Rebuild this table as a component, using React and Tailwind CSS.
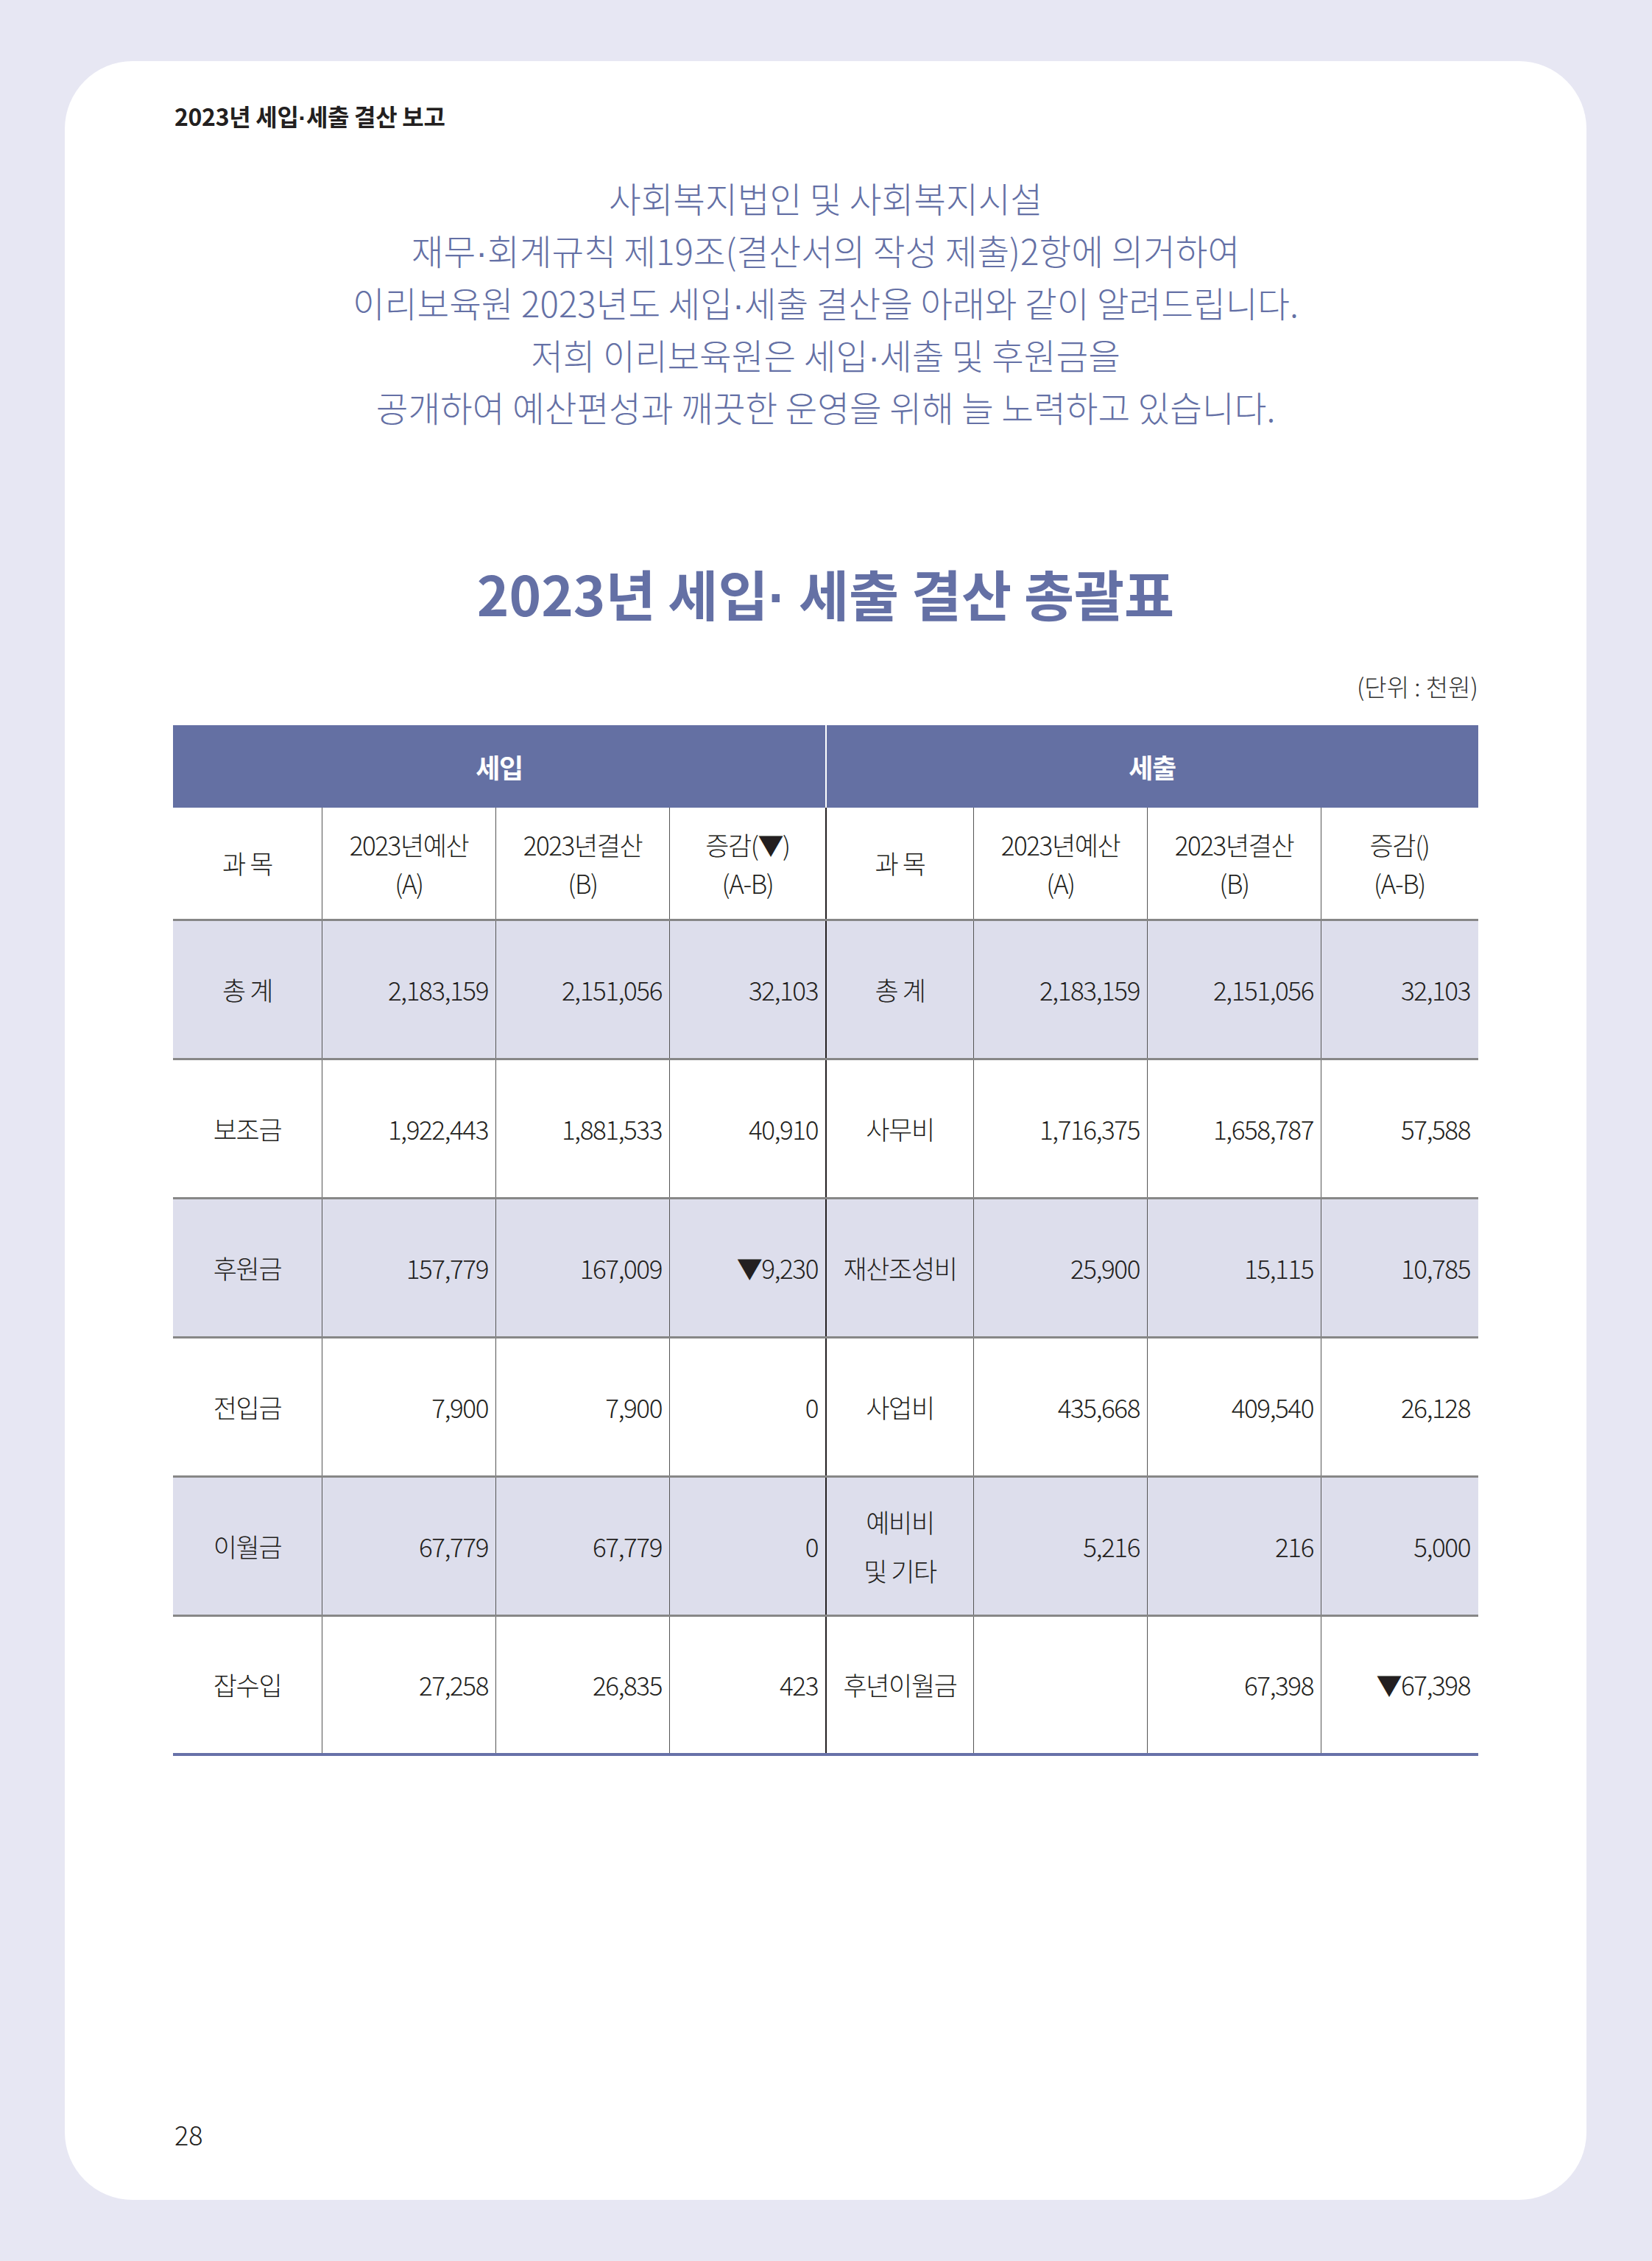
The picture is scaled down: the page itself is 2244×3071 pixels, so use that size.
import React from "react";

const rows = [
  { shade: true, a: ["총 계", "2,183,159", "2,151,056", "32,103"], b: ["총 계", "2,183,159", "2,151,056", "32,103"] },
  { shade: false, a: ["보조금", "1,922,443", "1,881,533", "40,910"], b: ["사무비", "1,716,375", "1,658,787", "57,588"] },
  { shade: true, a: ["후원금", "157,779", "167,009", "▼9,230"], b: ["재산조성비", "25,900", "15,115", "10,785"] },
  { shade: false, a: ["전입금", "7,900", "7,900", "0"], b: ["사업비", "435,668", "409,540", "26,128"] },
  { shade: true, a: ["이월금", "67,779", "67,779", "0"], b: ["예비비|및 기타", "5,216", "216", "5,000"] },
  { shade: false, a: ["잡수입", "27,258", "26,835", "423"], b: ["후년이월금", "", "67,398", "▼67,398"] },
];

const GRID = "grid grid-cols-[202px_236px_236px_212px_201px_236px_236px_213px]";
const VL = "border-l border-[#555555]";

function Dot() {
  return <span className="font-['Liberation_Sans',sans-serif] leading-none">·</span>;
}

function Label({ text }) {
  if (text.includes("|")) {
    const [l1, l2] = text.split("|");
    return (
      <div className="flex flex-col items-center leading-[66px]">
        <span>{l1}</span>
        <span>{l2}</span>
      </div>
    );
  }
  return <span>{text}</span>;
}

function SubHead({ l1, l2, border }) {
  return (
    <div className={`flex flex-col items-center justify-center leading-[52px] ${border}`}>
      <span>{l1}</span>
      <span>{l2}</span>
    </div>
  );
}

export default function App() {
  return (
    <div className="bg-[#e7e7f3] pl-[88px] py-[83px] font-['Noto_Sans_CJK_KR','Noto_Sans',sans-serif] text-[#231f20]">
      <div className="w-[2067px] h-[2905px] bg-white rounded-[92px] px-[147px] pt-[54px] flex flex-col">
        <div className="h-[40px] text-[32px] leading-[40px] font-semibold tracking-[-0.01em] pl-[2px]">
          2023년 세입<Dot />세출 결산 보고
        </div>

        <div className="mt-[56px] text-center text-[47.5px] leading-[71px] text-[#6470a5] font-light">
          <p className="h-[71px]">사회복지법인 및 사회복지시설</p>
          <p className="h-[71px]">재무<Dot />회계규칙 제19조(결산서의 작성 제출)2항에 의거하여</p>
          <p className="h-[71px]">이리보육원 2023년도 세입<Dot />세출 결산을 아래와 같이 알려드립니다.</p>
          <p className="h-[71px]">저희 이리보육원은 세입<Dot />세출 및 후원금을</p>
          <p className="h-[71px]">공개하여 예산편성과 깨끗한 운영을 위해 늘 노력하고 있습니다.</p>
        </div>

        <h1 className="mt-[172px] h-[90px] text-center text-[74px] leading-[90px] font-bold text-[#6470a5]">
          2023년 세입<Dot /> 세출 결산 총괄표
        </h1>

        <div className="mt-[62px] h-[40px] text-right text-[33px] leading-[40px] text-[#333333] font-light">
          (단위 : 천원)
        </div>

        <div className="mt-[33px] text-[35px] tracking-[-0.04em]">
          {/* header bar */}
          <div className={`${GRID} h-[112px] bg-[#6470a3] text-white font-bold text-[36px]`}>
            <div className="col-span-4 flex items-center justify-center">세입</div>
            <div className="col-span-4 flex items-center justify-center border-l-2 border-white">세출</div>
          </div>

          {/* sub header */}
          <div className={`${GRID} h-[154px] border-b-[3px] border-[#878787] font-light`}>
            <div className="flex items-center justify-center">과 목</div>
            <SubHead l1="2023년예산" l2="(A)" border={VL} />
            <SubHead l1="2023년결산" l2="(B)" border={VL} />
            <SubHead l1="증감(▼)" l2="(A-B)" border={VL} />
            <div className="flex items-center justify-center border-l-2 border-[#231f20]">과 목</div>
            <SubHead l1="2023년예산" l2="(A)" border={VL} />
            <SubHead l1="2023년결산" l2="(B)" border={VL} />
            <SubHead l1="증감()" l2="(A-B)" border={VL} />
          </div>

          {rows.map((r, i) => {
            const last = i === rows.length - 1;
            return (
              <div
                key={i}
                className={`${GRID} h-[189px] font-light ${r.shade ? "bg-[#dddeec]" : "bg-white"} ${
                  last ? "border-b-[4px] border-[#6771a8]" : "border-b-[3px] border-[#878787]"
                }`}
              >
                <div className="flex items-center justify-center">
                  <Label text={r.a[0]} />
                </div>
                {r.a.slice(1).map((v, j) => (
                  <div key={j} className={`flex items-center justify-end pr-[10px] ${VL}`}>
                    {v}
                  </div>
                ))}
                <div className="flex items-center justify-center border-l-2 border-[#231f20]">
                  <Label text={r.b[0]} />
                </div>
                {r.b.slice(1).map((v, j) => (
                  <div key={j} className={`flex items-center justify-end pr-[10px] ${VL}`}>
                    {v}
                  </div>
                ))}
              </div>
            );
          })}
        </div>

        <div className="mt-auto mb-[70px] text-[36px] leading-[40px] pl-[2px] font-light">28</div>
      </div>
    </div>
  );
}
